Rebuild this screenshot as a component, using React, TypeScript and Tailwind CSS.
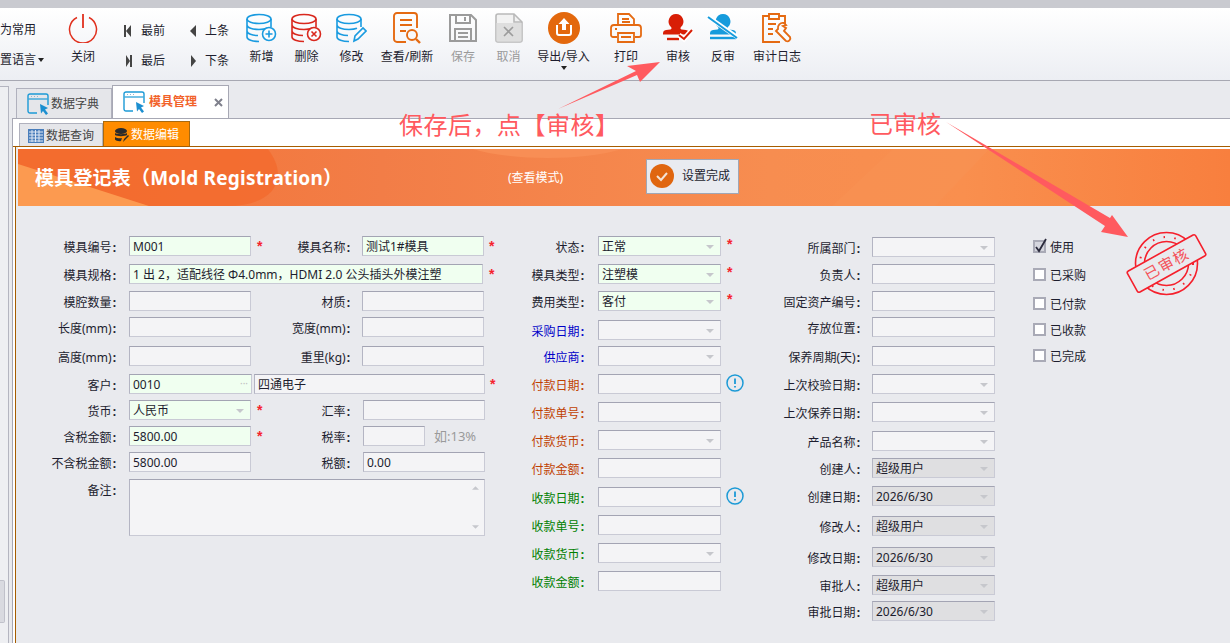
import type { ReactNode } from "react";

type Tone = "plain" | "green" | "gray";

const toneBg: Record<Tone, string> = {
  plain: "bg-[#f4f4f6]",
  green: "bg-[#f0fff0]",
  gray: "bg-[#dfdfe1]",
};

const Arrow = () => (
  <svg className="absolute right-[6px] top-[8px] h-[4px] w-[8px]" viewBox="0 0 8 4">
    <path d="M0 0h8L4 4z" fill="#c6c7cc" />
  </svg>
);

function Field({
  value,
  tone = "plain",
  drop,
  className = "w-[123px]",
  children,
}: {
  value?: string;
  tone?: Tone;
  drop?: boolean;
  className?: string;
  children?: ReactNode;
}) {
  return (
    <div
      className={`relative h-[20px] shrink-0 border border-[#c9cad5] border-t-[#a3a4b3] border-l-[#b4b5c3] pl-[3px] text-[12px] leading-[20px] whitespace-nowrap ${toneBg[tone]} ${className}`}
    >
      {value}
      {drop && <Arrow />}
      {children}
    </div>
  );
}

const Star = ({ className = "" }: { className?: string }) => (
  <span className={`block text-[14px] leading-[20px] font-bold text-[#f5222d] font-['Liberation_Sans',sans-serif] ${className}`}>*</span>
);

const Label = ({ text, className = "", color = "" }: { text: string; className?: string; color?: string }) => (
  <div className={`shrink-0 text-right text-[12px] leading-[24px] whitespace-nowrap ${color} ${className}`}>
    {text}
    <span className="ml-[1px] font-bold">:</span>
  </div>
);

const Info = () => (
  <svg className="ml-[5px] h-[18px] w-[18px]" viewBox="0 0 18 18" fill="none">
    <circle cx="9" cy="9" r="8" stroke="#1c9ad6" strokeWidth="1.5" />
    <path d="M9 4.5v5.5M9 12v1.6" stroke="#1c9ad6" strokeWidth="1.8" />
  </svg>
);

// ---- toolbar icons ----
const Db = ({ color, children }: { color: string; children: ReactNode }) => (
  <svg width="31" height="30" viewBox="0 0 31 30" fill="none" stroke={color} strokeWidth="1.6">
    <ellipse cx="13" cy="6" rx="12" ry="4.5" />
    <path d="M1 6v18c0 2.6 5.4 4.5 12 4.5M25 6v8M1 12c0 2.6 5.4 4.5 12 4.5 3 0 6-.4 8-1.2M1 18c0 2.6 5.4 4.5 11 4.5" />
    {children}
  </svg>
);

const DocSearch = () => (
  <svg width="30" height="32" viewBox="0 0 30 32" fill="none" stroke="#e56a12" strokeWidth="1.9">
    <path d="M14 30H5a3 3 0 0 1-3-3V4a3 3 0 0 1 3-3h17a3 3 0 0 1 3 3v12" />
    <path d="M8 8h12M8 13h12M8 19h6" />
    <circle cx="20" cy="23" r="5" />
    <path d="M24 27l4 4" strokeWidth="2.4" />
  </svg>
);

const Floppy = () => (
  <svg width="30" height="30" viewBox="0 0 30 30" fill="none" stroke="#9b9b9b" strokeWidth="2">
    <path d="M2 2h21l5 5v21H2z" />
    <path d="M8 2v8h14V2M17 4v4M7 28V16h16v12M10 20h10M10 24h10" />
  </svg>
);

const CancelDoc = () => (
  <svg width="28" height="30" viewBox="0 0 28 30" fill="none" stroke="#b9b9b9" strokeWidth="1.6">
    <path d="M3 1h16l8 8v18a2 2 0 0 1-2 2H3a2 2 0 0 1-2-2V3a2 2 0 0 1 2-2z" fill="#f2f2f2" />
    <path d="M1.500 10h25v18.500h-25z" fill="#dedede" stroke="none" />
    <path d="M19 1v8h8" />
    <path d="M9 14l9 9M18 14l-9 9" stroke="#9c9c9c" />
  </svg>
);

const ExportIcon = () => (
  <svg width="32" height="32" viewBox="0 0 32 32">
    <circle cx="16" cy="16" r="16" fill="#e3680d" />
    <path d="M9 13v8a2 2 0 0 0 2 2h10a2 2 0 0 0 2-2v-8" fill="none" stroke="#fff" strokeWidth="2" />
    <path d="M16 6l5.500 6H18v6h-4v-6h-3.500z" fill="#fff" />
  </svg>
);

const Printer = () => (
  <svg width="32" height="30" viewBox="0 0 32 30" fill="none" stroke="#e56a12" strokeWidth="1.8">
    <path d="M8 12V1h11l5 5v6M12 6h7M12 9h8" />
    <path d="M7 24H3a2 2 0 0 1-2-2v-7a3 3 0 0 1 3-3h24a3 3 0 0 1 3 3v7a2 2 0 0 1-2 2h-4" />
    <path d="M8 20h16v9H8zM11 24h10" />
    <path d="M5 16h2" />
  </svg>
);

const StampBody = "M14 1a7.500 7.500 0 0 1 5 13c-.8.8-.8 2 .5 2.500l4.500.5c2 .3 3 1.500 3 3.500v1H1v-1c0-2 1-3.200 3-3.500l4.500-.5c1.300-.5 1.300-1.700.5-2.500A7.500 7.500 0 0 1 14 1z";

const Approve = () => (
  <svg width="32" height="30" viewBox="0 0 32 30">
    <path d={StampBody} fill="#d81e06" />
    <path d="M5 26h12" stroke="#d81e06" strokeWidth="2.400" />
    <path d="M17 22l5 4 8-9" fill="none" stroke="#fff" strokeWidth="5" />
    <path d="M17 22l5 4 8-9" fill="none" stroke="#d81e06" strokeWidth="2" />
  </svg>
);

const Unapprove = () => (
  <svg width="32" height="30" viewBox="0 0 32 30">
    <path d={StampBody} fill="#169bdc" transform="translate(2 0)" />
    <path d="M3 25h26" stroke="#169bdc" strokeWidth="2.400" />
    <path d="M0 3l30 21" stroke="#fff" strokeWidth="4.500" />
    <path d="M1 4l29 21" stroke="#169bdc" strokeWidth="2" />
  </svg>
);

const AuditLog = () => (
  <svg width="32" height="32" viewBox="0 0 32 32" fill="none" stroke="#e56a12" strokeWidth="1.900">
    <path d="M8 4H2v26h17M24 14V4h-6" />
    <path d="M8 7V2h10v5z" />
    <path d="M7 12h8M7 17h5M7 22h5" />
    <path d="M23 11a5 5 0 0 0-6 6l-2 2 0 0 8 8 2 2a3 3 0 0 0 4-4l-6-6 2-3-3-2 3-1z" fill="#fbfbfc" />
  </svg>
);

const Tool = ({ label, w, icon, muted, caret }: { label: string; w: string; icon: ReactNode; muted?: boolean; caret?: boolean }) => (
  <div className={`flex shrink-0 flex-col items-center pt-[5px] ${w}`}>
    <div className="flex h-[30px] items-center justify-center">{icon}</div>
    <div className={`mt-[6px] text-[12px] leading-[16px] whitespace-nowrap ${muted ? "text-[#9a9a9a]" : ""}`}>{label}</div>
    {caret && <div className="mt-[1px] h-0 w-0 border-x-[3.500px] border-t-[4px] border-x-transparent border-t-[#222]" />}
  </div>
);

const NavIcon = ({ d }: { d: string }) => (
  <svg width="8" height="12" viewBox="0 0 8 12"><path d={d} fill="#444" /></svg>
);

const Nav = ({ label, d }: { label: string; d: string }) => (
  <div className="flex h-[18px] items-center gap-[9px] text-[12px]">
    <NavIcon d={d} />
    <span>{label}</span>
  </div>
);

const WindowIcon = () => (
  <svg width="22" height="22" viewBox="0 0 22 22" fill="none">
    <path d="M10 20H3a2 2 0 0 1-2-2V3a2 2 0 0 1 2-2h16a2 2 0 0 1 2 2v9" stroke="#1c9ad6" strokeWidth="1.400" />
    <path d="M1.500 6h19" stroke="#1c9ad6" strokeWidth="1.200" />
    <path d="M4 3.500h1M7 3.500h1M10 3.500h1" stroke="#8fb8d0" />
    <path d="M13 11l8 4-3 1.500 3 4-2 1.500-3-4-2 2.500z" fill="#1c8fd0" />
  </svg>
);

// ---- form rows ----
type Side = { label: string; color?: string; value?: string; tone?: Tone; drop?: boolean; star?: boolean; info?: boolean; h: string };

const blue = "text-[#0000c8]";
const rust = "text-[#c04000]";
const green = "text-[#008000]";

const middle: Side[] = [
  { label: "状态", value: "正常", tone: "green", drop: true, star: true, h: "h-[28px]" },
  { label: "模具类型", value: "注塑模", tone: "green", drop: true, star: true, h: "h-[27px]" },
  { label: "费用类型", value: "客付", tone: "green", drop: true, star: true, h: "h-[29px]" },
  { label: "采购日期", color: blue, drop: true, h: "h-[26px]" },
  { label: "供应商", color: blue, drop: true, h: "h-[28px]" },
  { label: "付款日期", color: rust, info: true, h: "h-[28px]" },
  { label: "付款单号", color: rust, h: "h-[28px]" },
  { label: "付款货币", color: rust, drop: true, h: "h-[28px]" },
  { label: "付款金额", color: rust, h: "h-[29px]" },
  { label: "收款日期", color: green, info: true, h: "h-[28px]" },
  { label: "收款单号", color: green, h: "h-[28px]" },
  { label: "收款货币", color: green, drop: true, h: "h-[28px]" },
  { label: "收款金额", color: green, h: "h-[20px]" },
];

const right: Side[] = [
  { label: "所属部门", drop: true, h: "h-[27px]" },
  { label: "负责人", h: "h-[27px]" },
  { label: "固定资产编号", h: "h-[26px]" },
  { label: "存放位置", h: "h-[29px]" },
  { label: "保养周期(天)", h: "h-[28px]" },
  { label: "上次校验日期", drop: true, h: "h-[28px]" },
  { label: "上次保养日期", drop: true, h: "h-[29px]" },
  { label: "产品名称", drop: true, h: "h-[27px]" },
  { label: "创建人", value: "超级用户", tone: "gray", drop: true, h: "h-[28px]" },
  { label: "创建日期", value: "2026/6/30", tone: "gray", drop: true, h: "h-[30px]" },
  { label: "修改人", value: "超级用户", tone: "gray", drop: true, h: "h-[31px]" },
  { label: "修改日期", value: "2026/6/30", tone: "gray", drop: true, h: "h-[28px]" },
  { label: "审批人", value: "超级用户", tone: "gray", drop: true, h: "h-[26px]" },
  { label: "审批日期", value: "2026/6/30", tone: "gray", drop: true, h: "h-[20px]" },
];

const checks = [
  { label: "使用", on: true, h: "h-[28px]" },
  { label: "已采购", h: "h-[29px]" },
  { label: "已付款", h: "h-[26px]" },
  { label: "已收款", h: "h-[26px]" },
  { label: "已完成", h: "h-[20px]" },
];

const leftLabel = "w-[98px] mr-[13px]";
const secondLabel = "w-[79px] mr-[12px]";

function LeftForm() {
  return (
    <div className="w-[482px] shrink-0 pt-[30px]">
      <div className="flex h-[28px]">
        <Label text="模具编号" className={leftLabel} />
        <Field value="M001" tone="green" className="w-[122px]" />
        <div className="w-[20px] pl-[6px]"><Star /></div>
        <Label text="模具名称" className={secondLabel} />
        <Field value="测试1#模具" tone="green" className="w-[122px]" />
        <Star className="ml-[5px]" />
      </div>
      <div className="flex h-[27px]">
        <Label text="模具规格" className={leftLabel} />
        <Field value="1 出 2，适配线径 Φ4.0mm，HDMI 2.0 公头插头外模注塑" tone="green" className="w-[354px]" />
        <Star className="ml-[6px]" />
      </div>
      <div className="flex h-[26px]">
        <Label text="模腔数量" className={leftLabel} />
        <Field className="w-[122px]" />
        <div className="w-[20px]" />
        <Label text="材质" className={secondLabel} />
        <Field className="w-[122px]" />
      </div>
      <div className="flex h-[29px]">
        <Label text="长度(mm)" className={leftLabel} />
        <Field className="w-[122px]" />
        <div className="w-[20px]" />
        <Label text="宽度(mm)" className={secondLabel} />
        <Field className="w-[122px]" />
      </div>
      <div className="flex h-[28px]">
        <Label text="高度(mm)" className={leftLabel} />
        <Field className="w-[122px]" />
        <div className="w-[20px]" />
        <Label text="重里(kg)" className={secondLabel} />
        <Field className="w-[122px]" />
      </div>
      <div className="flex h-[26px]">
        <Label text="客户" className={leftLabel} />
        <Field value="0010" tone="green" className="w-[123px]">
          <span className="absolute right-[3px] top-[-2px] text-[10px] text-[#c0c0c0]">···</span>
        </Field>
        <Field value="四通电子" className="ml-[2px] w-[231px]" />
        <Star className="ml-[5px]" />
      </div>
      <div className="flex h-[26px]">
        <Label text="货币" className={leftLabel} />
        <Field value="人民币" tone="green" drop className="w-[122px]" />
        <div className="w-[20px] pl-[6px]"><Star /></div>
        <Label text="汇率" className="mr-[13px] w-[79px]" />
        <Field className="w-[122px]" />
      </div>
      <div className="flex h-[26px]">
        <Label text="含税金额" className={leftLabel} />
        <Field value="5800.00" tone="green" className="w-[122px]" />
        <div className="w-[20px] pl-[6px]"><Star /></div>
        <Label text="税率" className="mr-[13px] w-[79px]" />
        <Field className="w-[62px]" />
        <span className="ml-[9px] text-[13px] leading-[20px] text-[#9a9a9a]">如:13%</span>
      </div>
      <div className="flex h-[27px]">
        <Label text="不含税金额" className={leftLabel} />
        <Field value="5800.00" className="w-[122px]" />
        <div className="w-[20px]" />
        <Label text="税额" className="mr-[13px] w-[79px]" />
        <Field value="0.00" className="w-[122px]" />
      </div>
      <div className="flex">
        <Label text="备注" className={leftLabel} />
        <Field className="!h-[57px] w-[356px]">
          <svg className="absolute right-[5px] top-[6px] h-[4px] w-[7px]" viewBox="0 0 8 4"><path d="M0 4h8L4 0z" fill="#c6c7cc" /></svg>
          <svg className="absolute bottom-[6px] right-[5px] h-[4px] w-[7px]" viewBox="0 0 8 4"><path d="M0 0h8L4 4z" fill="#c6c7cc" /></svg>
        </Field>
      </div>
    </div>
  );
}

function SideColumn({ rows, labelW, gap, top }: { rows: Side[]; labelW: string; gap: string; top: string }) {
  return (
    <div className={`shrink-0 ${top}`}>
      {rows.map((r) => (
        <div key={r.label} className={`flex ${r.h}`}>
          <Label text={r.label} color={r.color} className={`${labelW} ${gap}`} />
          <Field value={r.value} tone={r.tone} drop={r.drop} />
          {r.star && <Star className="ml-[6px] -mt-[2px]" />}
          {r.info && <Info />}
        </div>
      ))}
    </div>
  );
}

export default function App() {
  return (
    <div className="relative h-[643px] w-[1230px] overflow-hidden bg-[#e9eaee] font-['Noto_Sans','Noto_Sans_CJK_SC',sans-serif] text-[#1d1d2e]">
      <div className="h-[8px] bg-[#c9cad0]" />

      {/* Toolbar */}
      <div className="flex h-[73px] border-b border-[#a7a8b2] bg-gradient-to-b from-white to-[#eceef3]">
        <div className="w-[50px] shrink-0 pt-[13px] text-[12px]">
          <div className="h-[18px] leading-[18px]">为常用</div>
          <div className="mt-[12px] flex h-[18px] items-center">
            置语言
            <span className="ml-[2px] h-0 w-0 border-x-[3.500px] border-t-[4px] border-x-transparent border-t-[#222]" />
          </div>
        </div>
        <div className="ml-[13px]">
          <Tool
            label="关闭"
            w="w-[40px]"
            icon={
              <svg width="30" height="30" viewBox="0 0 30 30" fill="none" stroke="#e0301e" strokeWidth="1.500">
                <path d="M9 4.500a13.500 13.500 0 1 0 12 0" />
                <path d="M15 1v14" strokeWidth="1.800" />
              </svg>
            }
          />
        </div>
        <div className="ml-[21px] grid w-[115px] shrink-0 grid-cols-[64px_51px] gap-y-[12px] pt-[14px] content-start">
          <Nav label="最前" d="M0 0h2v12H0zM7 0v12L2 6z" />
          <Nav label="上条" d="M8 0v12L2 6z" />
          <Nav label="最后" d="M2 0l4 6-4 6zM6 0h2v12H6z" />
          <Nav label="下条" d="M3 0l5 6-5 6z" />
        </div>
        <Tool label="新增" w="w-[45px]" icon={<Db color="#1a9be0"><circle cx="23" cy="21" r="6.500" fill="#fbfbfc" /><path d="M23 17.500v7M19.500 21h7" /></Db>} />
        <Tool label="删除" w="w-[45px]" icon={<Db color="#d9281e"><circle cx="23" cy="21" r="6.500" fill="#fbfbfc" /><path d="M20.500 18.500l5 5M25.500 18.500l-5 5" /></Db>} />
        <Tool label="修改" w="w-[45px]" icon={<Db color="#1a9be0"><path d="M18 28l1-5 8-8 3 3-8 8z" fill="#fbfbfc" /></Db>} />
        <Tool label="查看/刷新" w="w-[66px]" icon={<DocSearch />} />
        <Tool label="保存" w="w-[46px]" muted icon={<Floppy />} />
        <Tool label="取消" w="w-[45px]" muted icon={<CancelDoc />} />
        <Tool label="导出/导入" w="w-[65px]" caret icon={<ExportIcon />} />
        <Tool label="打印" w="w-[60px]" icon={<Printer />} />
        <Tool label="审核" w="w-[44px]" icon={<Approve />} />
        <Tool label="反审" w="w-[46px]" icon={<Unapprove />} />
        <Tool label="审计日志" w="w-[62px]" icon={<AuditLog />} />
      </div>

      {/* Body */}
      <div className="flex h-[562px]">
        <aside className="relative mt-[5px] w-[9px] shrink-0 border-r border-t border-[#b4b5c0] bg-[#eeeff2]">
          <div className="absolute left-0 top-[493px] h-[43px] w-[5px] rounded-r-[2px] border border-l-0 border-[#c0c1ca] bg-[#d9dae0]" />
        </aside>
        <main className="ml-[3px] flex min-w-0 flex-1 flex-col">
          {/* Tabs */}
          <div className="flex h-[37px] items-end pl-[4px]">
            <div className="flex h-[30px] w-[96px] items-center gap-[2px] border border-b-0 border-[#b0b1bd] bg-[#e5e6ea] pl-[10px] text-[12px] text-[#444]">
              <WindowIcon />
              <span>数据字典</span>
            </div>
            <div className="flex h-[33px] w-[117px] items-center border border-b-0 border-[#a7a8b4] bg-white pl-[10px] text-[12px] font-bold text-[#f2622a]">
              <WindowIcon />
              <span className="ml-[4px]">模具管理</span>
              <svg className="ml-[17px]" width="9" height="9" viewBox="0 0 9 9"><path d="M1 1l7 7M8 1L1 8" stroke="#7f808c" strokeWidth="2" /></svg>
            </div>
          </div>

          {/* Panel */}
          <div className="min-h-0 flex-1 border-l border-t border-[#a7a8b4] bg-white pt-[2px]">
            <div className="flex h-[26px] items-end border-b border-[#a65d00] pl-[6px]">
              <div className="flex h-[23px] w-[84px] items-center gap-[2px] border border-b-0 border-[#b0b1bd] bg-[#e5e6ea] pl-[8px] pt-[2px] text-[12px] text-[#444]">
                <svg width="16" height="14" viewBox="0 0 16 14">
                  <path d="M0 0h16v14H0z" fill="#4a7ebb" />
                  <path d="M1 3h14M1 6h14M1 9h14M1 12h14M4 1v12M7.500 1v12M11 1v12" stroke="#dfe8f4" />
                </svg>
                <span>数据查询</span>
              </div>
              <div className="flex h-[25px] w-[87px] items-center gap-[2px] border border-b-0 border-[#a86a10] bg-[#ff8c00] pl-[10px] pt-[2px] text-[12px] text-white">
                <svg width="15" height="15" viewBox="0 0 15 15" fill="#2b2b2b">
                  <ellipse cx="7" cy="3" rx="6" ry="3" />
                  <path d="M1 5c1.500 1.500 10.500 1.500 12 0v2c-1.500 1.500-10.500 1.500-12 0zM1 9c1.500 1.500 6 1.500 7 1l-1 3c-2 .5-5 0-6-1.500z" />
                  <path d="M9 14l1-3 4-4 1 1-4 4z" />
                </svg>
                <span>数据编辑</span>
              </div>
            </div>

            <div className="ml-[2px] h-[497px] border-l border-[#a65d00] bg-[#e9eaee] pl-[2px]">
              <div className="h-[2px] bg-white" />
              {/* Banner */}
              <div className="relative flex h-[57px] items-center overflow-hidden bg-[linear-gradient(90deg,#f47333_0%,#f27d47_30%,#f78d50_62%,#f98f4e_78%,#f87f3e_100%)] pl-[17px] text-white">
                <svg className="absolute inset-0 h-full w-full" viewBox="0 0 1213 57" preserveAspectRatio="none">
                  <path d="M0 0h250c22 28 8 57-40 57h-80L0 16z" fill="#f26a2d" opacity="0.8" />
                  <path d="M0 15l131 42H0z" fill="#fc9a50" />
                  <path d="M455 0c40 12 110 12 150 0z" fill="#f88e55" />
                  <path d="M815 57 L876 0 H972 L918 57z" fill="#f89252" opacity="0.7" />
                </svg>
                <div className="relative w-[473px] shrink-0 text-[19px] leading-[24px] font-bold tracking-[0.2px]">模具登记表（Mold Registration）</div>
                <div className="relative w-[138px] shrink-0 text-[12px]">(查看模式)</div>
                <div className="relative -mt-[3px] flex h-[35px] w-[93px] items-center border border-[#a0a6b5] bg-[#e9ebf0] pl-[3px] text-[12px] text-[#1d1d2e]">
                  <svg width="24" height="24" viewBox="0 0 24 24">
                    <circle cx="12" cy="12" r="12" fill="#e0660f" />
                    <path d="M7 12l4 4 6-7" fill="none" stroke="#f3e3d4" strokeWidth="2" />
                  </svg>
                  <span className="ml-[8px]">设置完成</span>
                </div>
              </div>

              {/* Form */}
              <div className="flex">
                <LeftForm />
                <SideColumn rows={middle} labelW="w-[84px]" gap="mr-[14px]" top="pt-[30px]" />
                <div className="w-[6px] shrink-0" />
                <SideColumn rows={right} labelW="w-[110px]" gap="mr-[12px]" top="pt-[31px]" />
                <div className="ml-[38px] shrink-0 pt-[34px]">
                  {checks.map((c) => (
                    <div key={c.label} className={`flex items-start gap-[4px] text-[12px] ${c.h}`}>
                      <span className={`relative block h-[13px] w-[13px] border-2 border-[#a9aab6] ${c.on ? "bg-[#d5d6de]" : "bg-white"}`}>
                        {c.on && (
                          <svg className="absolute -left-[1px] -top-[4px]" width="14" height="16" viewBox="0 0 14 16" fill="none">
                            <path d="M2 9l3 4 7-12" stroke="#2a2a3c" strokeWidth="1.800" />
                          </svg>
                        )}
                      </span>
                      <span className="leading-[16px]">{c.label}</span>
                    </div>
                  ))}
                </div>
              </div>
            </div>
          </div>
        </main>
      </div>

      {/* Annotations over the screenshot */}
      <div className="absolute left-[399px] top-[110px] text-[24px] leading-[30px] tracking-[0.5px] whitespace-nowrap text-[#ff5a5f]">保存后，点【审核】</div>
      <div className="absolute left-[869px] top-[109px] text-[24px] leading-[30px] whitespace-nowrap text-[#ff5a5f]">已审核</div>
      <svg className="pointer-events-none absolute inset-0" width="1230" height="643" viewBox="0 0 1230 643">
        <path d="M558 109 636 71 627 66 660 62 640 82 637 75z" fill="#ff5a5f" />
        <path d="M946 122 1110 218 1112 215 1128 237 1101 232 1105 226z" fill="#ff5a5f" />
        <g fill="none" stroke="#f5202c">
          <circle cx="1166.500" cy="263.500" r="31" strokeWidth="1.600" />
          <circle cx="1166.500" cy="263.500" r="22" strokeWidth="1.600" />
          <circle cx="1166.500" cy="263.500" r="26.500" strokeWidth="2" strokeDasharray="1.500 9.500" />
          <g transform="rotate(-29 1166.500 263.500)">
            <rect x="1127.500" y="251.500" width="78" height="24" rx="2" fill="#e9eaee" strokeWidth="1.600" />
            <text x="1166.500" y="269.500" textAnchor="middle" stroke="none" fill="#f4545c" fontSize="15" letterSpacing="1.500">已审核</text>
          </g>
        </g>
      </svg>
    </div>
  );
}
